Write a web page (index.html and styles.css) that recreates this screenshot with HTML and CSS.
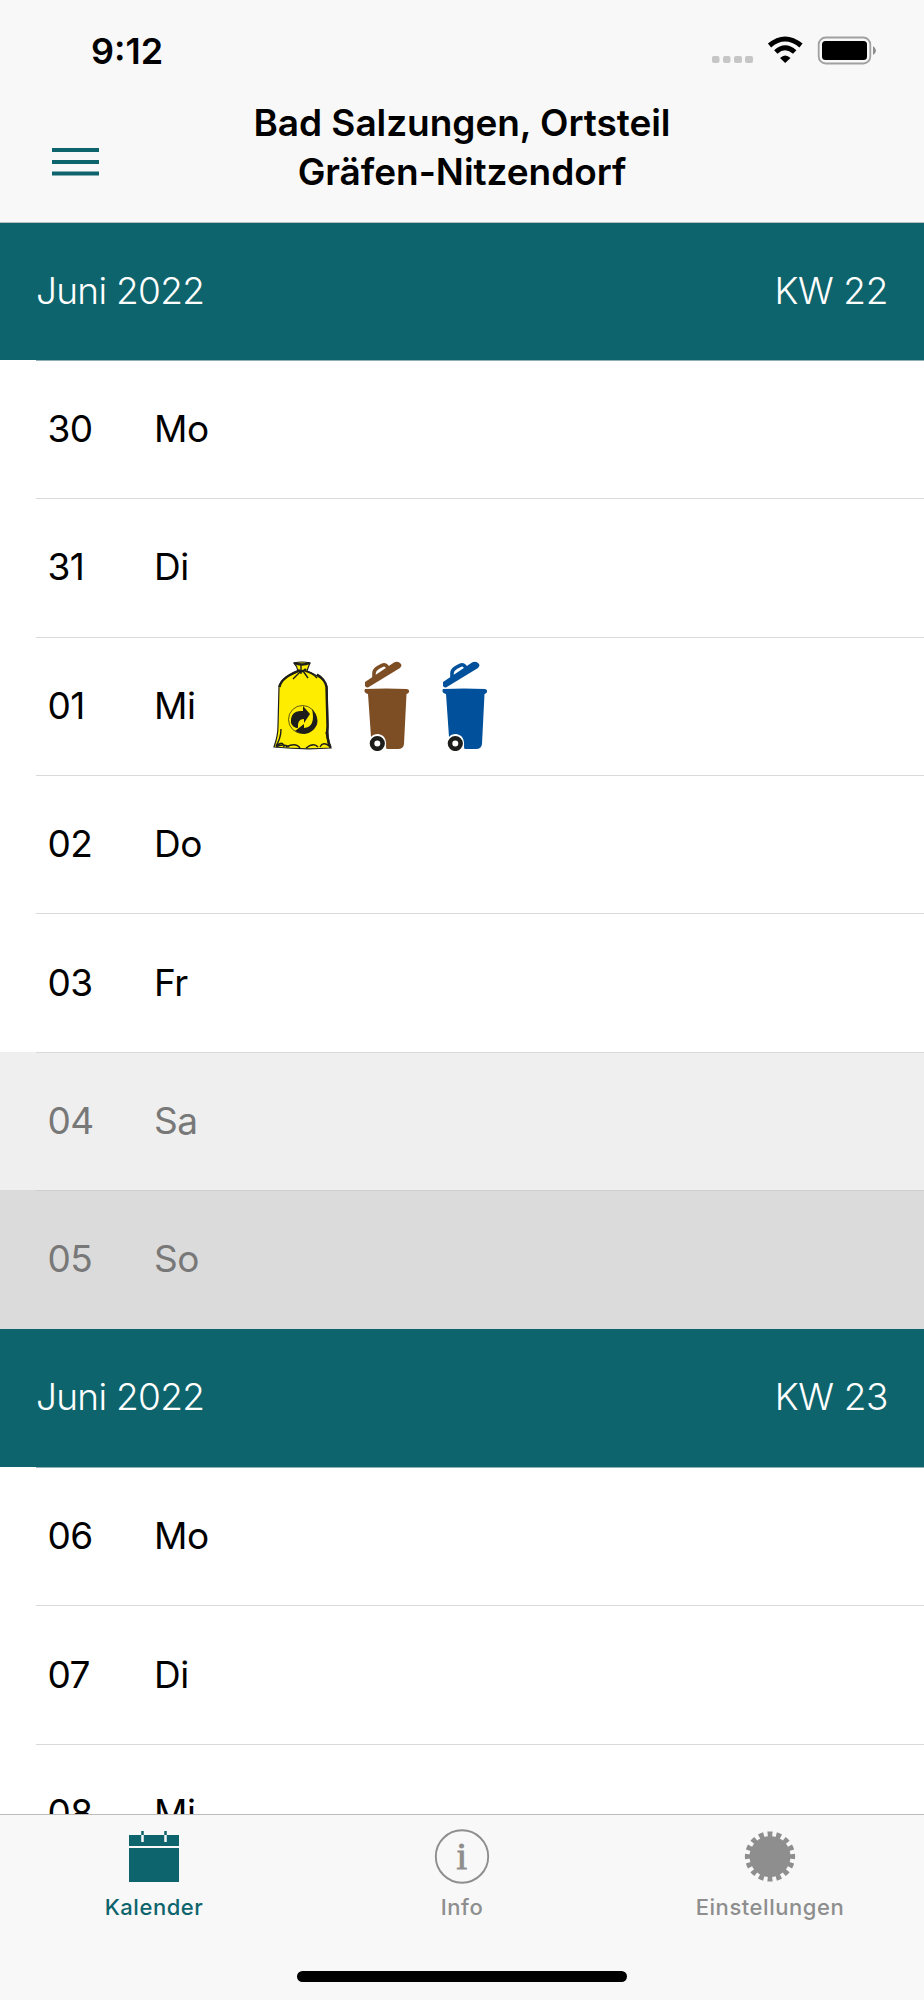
FILE: index.html
```html
<!DOCTYPE html>
<html lang="de">
<head>
<meta charset="utf-8">
<title>Abfallkalender</title>
<link rel="stylesheet" href="styles.css">
</head>
<body>
<svg width="0" height="0" class="defs">
  <defs>
    <symbol id="bin" viewBox="0 0 46 90">
      <path fill="currentColor" d="M1 21 30 1.500Q34-.5 37 3Q38 5 36 7L4 26.500Q2 26.500 1 25Z"/>
      <path fill="none" stroke="currentColor" stroke-width="3.600" d="M10 16V12Q10 9 14 6.500L18 4.300Q22 2.500 24 7"/>
      <path fill="currentColor" d="M1 28Q22 27 43 28Q45.500 28.500 45 31Q44.500 32.500 42.500 33L40 83Q39.500 88 34 88H23Q22 88 22 86Q23 74 14 73Q9 73 7 76L4 33Q.5 32 .5 30Q.5 28.500 1 28Z"/>
      <circle cx="13.300" cy="82.500" r="5.300" fill="#fff" stroke="#1d1d1b" stroke-width="4.600"/>
    </symbol>
  </defs>
</svg>
<div class="screen">
  <header class="top">
    <div class="status">
      <span class="time">9:12</span>
      <svg class="status-icons" width="166" height="30" viewBox="0 0 166 30">
        <g fill="#c6c6c6"><rect x="0" y="20" width="7.500" height="7" rx="2"/><rect x="11" y="20" width="7.500" height="7" rx="2"/><rect x="22" y="20" width="8" height="7" rx="2"/><rect x="33" y="20" width="8" height="7" rx="2"/></g>
        <g fill="none" stroke="#000" stroke-width="5"><path d="M57.500 9.500Q73 -3.500 89 9.500"/><path d="M63.800 16Q73.200 7.500 82.700 16"/></g>
        <path d="M68 22Q73.200 17 78.500 22L73.200 27Z"/>
        <rect x="106.700" y="1.500" width="51.600" height="26" rx="7" fill="none" stroke="#a0a0a0" stroke-width="1.800"/>
        <rect x="110" y="5" width="45" height="19" rx="3.500"/><path fill="#8c8c8c" d="M161 10Q167 14.500 161 19Z"/>
      </svg>
    </div>
    <div class="nav">
      <svg class="menu" width="48" height="30" viewBox="0 0 48 30"><path stroke="#0e646c" stroke-width="4" d="M0 3H47M0 15H47M0 26.500H47"/></svg>
      <h1>Bad Salzungen, Ortsteil<br>Gräfen-Nitzendorf</h1>
    </div>
  </header>
  <main class="list">
    <div class="week"><span class="month">Juni 2022</span><span class="kw">KW 22</span></div>
    <div class="day after-week"><span class="num">30</span><span class="name">Mo</span></div>
    <div class="day"><span class="num">31</span><span class="name">Di</span></div>
    <div class="day"><span class="num">01</span><span class="name">Mi</span>
      <div class="pickups">
        <svg class="sack" width="60" height="92" viewBox="0 0 60 92">
          <path fill="#ffed00" stroke="#1d1d1b" stroke-width="1.200" d="M25 11Q7 18 6 27L5 66Q5 76 1 87Q30 90 58 88Q54 78 55 66L54 27Q52 18 34 11Q36 5 37 3Q29 1 21 3Q24 6 25 11Z"/>
          <path fill="none" stroke="#1d1d1b" stroke-width="2.400" d="M21 3Q29 6 37 3M25 10Q29 13 33 9M44 14.500Q52 19 53.500 27L54.500 66Q53 78 57.500 87.500M25 11Q8 18 6.500 27"/>
          <path fill="none" stroke="#1d1d1b" stroke-width="1.400" d="M28 5V14M28 11 20 19M26 11 15 16M30 11 35 18M32 11Q40 13 44 18M8 69Q8 78 3 86Q10 80 11 87M53 72Q55 81 56 86Q50 81 47 87M13 87Q23 82 27 88M33 88Q41 82 45 87M3 87Q10 83 16 87"/>
          <circle cx="29.500" cy="59.500" r="14" fill="none" stroke="#1d1d1b" stroke-width=".7"/>
          <path fill="#1d1d1b" d="M18 63Q17 50 30 51V46L37 54L31 63V59Q24 59 25 68Q20 68 18 63ZM39 49Q50 62 39 71Q32 77 22 71L31 64V68Q43 67 39 49Z"/>
        </svg>
        <svg class="bin brown" width="46" height="90"><use href="#bin"/></svg>
        <svg class="bin blue" width="46" height="90"><use href="#bin"/></svg>
      </div>
    </div>
    <div class="day"><span class="num">02</span><span class="name">Do</span></div>
    <div class="day"><span class="num">03</span><span class="name">Fr</span></div>
    <div class="day saturday"><span class="num">04</span><span class="name">Sa</span></div>
    <div class="day sunday"><span class="num">05</span><span class="name">So</span></div>
    <div class="week"><span class="month">Juni 2022</span><span class="kw">KW 23</span></div>
    <div class="day after-week"><span class="num">06</span><span class="name">Mo</span></div>
    <div class="day"><span class="num">07</span><span class="name">Di</span></div>
    <div class="day"><span class="num">08</span><span class="name">Mi</span></div>
  </main>
  <footer class="tabs">
    <div class="tab active">
      <svg width="56" height="56" viewBox="0 0 56 56"><path fill="currentColor" d="M3 6H53V17H3ZM3 19H53V53H3Z"/><path stroke="#f8f8f8" stroke-width="2.500" d="M16.500 6V13M39.500 6V13"/><path stroke="currentColor" stroke-width="2.500" d="M16.500 2V6M39.500 2V6"/></svg>
      <span>Kalender</span>
    </div>
    <div class="tab">
      <svg width="56" height="56" viewBox="0 0 56 56"><circle cx="28" cy="27.500" r="26.200" fill="none" stroke="currentColor" stroke-width="1.900"/><text x="28" y="40" class="info-i">i</text></svg>
      <span>Info</span>
    </div>
    <div class="tab">
      <svg width="56" height="56" viewBox="0 0 56 56"><circle cx="28" cy="27.500" r="20.500" fill="currentColor"/><circle cx="28" cy="27.500" r="22.300" fill="none" stroke="currentColor" stroke-width="5.600" pathLength="160" stroke-dasharray="5.600 4.400" stroke-dashoffset="2.800"/></svg>
      <span>Einstellungen</span>
    </div>
    <div class="home"></div>
  </footer>
</div>
</body>
</html>
```
FILE: styles.css
```css
* { box-sizing: border-box; }
body { margin: 0; font-family: Inter, "Liberation Sans", sans-serif; color: #000; }
.defs { position: absolute; }
.screen { width: 924px; height: 2000px; overflow: hidden; display: flex; flex-direction: column; background: #fff; }
.top { height: 223px; flex: none; background: #f8f8f8; border-bottom: 1px solid #b9bfc0; }
.status { height: 97px; padding: 36px 46px 0 91px; display: flex; justify-content: space-between; }
.time { font-size: 36px; line-height: 30px; font-weight: 600; }
.nav { display: grid; grid-template-columns: 200px 1fr 200px; }
.menu { margin: 50px 0 0 52px; }
h1 { margin: 1px 0 0; font-size: 37px; line-height: 49px; font-weight: 600; letter-spacing: -.05px; text-align: center; white-space: nowrap; }
.list { flex: 1; min-height: 0; overflow: hidden; }
.week, .day { height: 138.4px; display: flex; align-items: center; font-size: 37px; line-height: 46px; letter-spacing: -.7px; }
.week { background: #0e646c; color: #fff; padding: 0 36px 1px; justify-content: space-between; font-weight: 360; }
.month { letter-spacing: -.7px; }
.kw { letter-spacing: -.4px; }
.week:first-child { height: 136.8px; }
.day { padding-left: 47.5px; background-image: linear-gradient(#d9d9dc, #d9d9dc); background-repeat: no-repeat; background-size: 888px 1px; background-position: 36px 0; }
.after-week { background-image: linear-gradient(#8fb0b4, #8fb0b4); }
.num { width: 106.500px; }
.name { width: 118.5px; letter-spacing: -.4px; }
.saturday { background-color: #efefef; color: #787878; }
.sunday { background-color: #dbdbdb; color: #787878; background-image: linear-gradient(#cfcfd0, #cfcfd0); }
.pickups { display: flex; align-items: center; }
.bin { margin-left: 32px; }
.brown { color: #7d4e24; margin-left: 31.5px; }
.blue { color: #00509b; }
.tabs { height: 186px; flex: none; background: #f8f8f8; border-top: 1px solid #bcbcbc; display: grid; grid-template-columns: repeat(3, 1fr); grid-template-rows: 142px 11px; padding-top: 14px; }
.tab { display: flex; flex-direction: column; align-items: center; color: #8e8e8e; font-size: 22px; line-height: 28px; font-weight: 480; letter-spacing: .55px; }
.tab span { margin-top: 8px; }
.active { color: #0e646c; }
.info-i { font: 38px "Liberation Serif", serif; text-anchor: middle; fill: currentColor; stroke: currentColor; stroke-width: 1px; }
.home { grid-column: 1 / 4; justify-self: center; width: 330px; height: 11px; border-radius: 6px; background: #000; }
```
